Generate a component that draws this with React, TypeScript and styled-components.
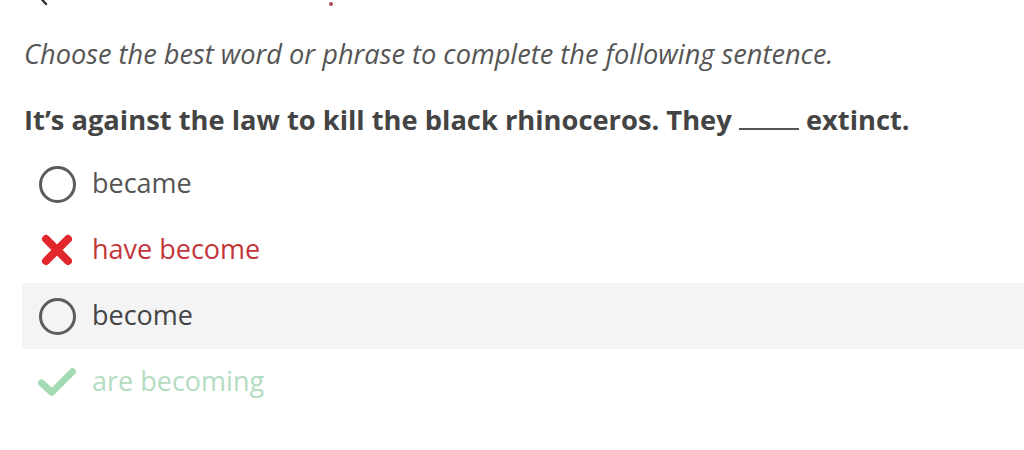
import React from "react";
import styled, { createGlobalStyle } from "styled-components";

const Global = createGlobalStyle`
  html, body { margin: 0; padding: 0; background: #ffffff; }
  body { font-family: "Open Sans", "Liberation Sans", sans-serif; overflow: hidden; }
`;

const Page = styled.div`
  width: 1024px;
  height: 450px;
  display: flex;
  flex-direction: column;
  background: #fff;
`;

const TopBar = styled.div`
  height: 8px;
  display: flex;
  align-items: flex-start;
  padding-left: 37px;
  overflow: hidden;
`;

const Dot = styled.span`
  width: 4px;
  height: 4px;
  border-radius: 50%;
  background: #b04a55;
  margin-left: 278px;
  margin-top: 2px;
`;

const Content = styled.div`
  padding: 0 0 0 22px;
  display: flex;
  flex-direction: column;
`;

const Instruction = styled.p`
  margin: 28px 0 0 2px;
  font-style: italic;
  font-size: 27.2px;
  line-height: 36px;
  color: #555555;
`;

const Question = styled.h2`
  margin: 30px 0 0 2px;
  font-weight: 700;
  font-size: 27.3px;
  line-height: 36px;
  color: #444444;
`;

const Blank = styled.span`
  display: inline-block;
  width: 60px;
  border-bottom: 2px solid #555;
  vertical-align: baseline;
`;

const Options = styled.div`
  margin-top: 13px;
  display: flex;
  flex-direction: column;
`;

type Tone = "plain" | "wrong" | "hover" | "right";

const Row = styled.div<{ $tone: Tone }>`
  height: 66px;
  display: flex;
  align-items: center;
  padding-left: 16px;
  gap: 16px;
  background: ${(p) => (p.$tone === "hover" ? "#f4f4f4" : "transparent")};
  font-size: 27px;
  color: ${(p) =>
    p.$tone === "wrong" ? "#c3363b" : p.$tone === "right" ? "#b4dcc1" : p.$tone === "hover" ? "#444" : "#555"};
`;

const IconBox = styled.span`
  width: 38px;
  height: 38px;
  display: flex;
  align-items: center;
  justify-content: center;
  flex: none;
`;

const Radio = styled.span`
  width: 31px;
  height: 31px;
  border-radius: 50%;
  border: 3px solid #5c5c5c;
`;

const Label = styled.span`
  line-height: 1;
  margin-top: -4px;
`;

const Cross = () => (
  <svg width="34" height="34" viewBox="0 0 34 34">
    <path d="M6 6 L28 28 M28 6 L6 28" stroke="#e1272b" strokeWidth="8" strokeLinecap="round" />
  </svg>
);

const Check = () => (
  <svg width="44" height="34" viewBox="0 0 44 34">
    <path d="M4 18 L16 29 L40 5" stroke="#a5dbb4" strokeWidth="8" fill="none" strokeLinecap="round" strokeLinejoin="round" />
  </svg>
);

const Chevron = () => (
  <svg width="14" height="8" viewBox="0 0 14 8">
    <path d="M0 -6 L9 4" stroke="#333" strokeWidth="2.4" strokeLinecap="round" />
  </svg>
);

export default function App() {
  return (
    <Page>
      <Global />
      <TopBar>
        <Chevron />
        <Dot />
      </TopBar>
      <Content>
        <Instruction>Choose the best word or phrase to complete the following sentence.</Instruction>
        <Question>
          It’s against the law to kill the black rhinoceros. They <Blank /> extinct.
        </Question>
        <Options>
          <Row $tone="plain">
            <IconBox><Radio /></IconBox>
            <Label>became</Label>
          </Row>
          <Row $tone="wrong">
            <IconBox><Cross /></IconBox>
            <Label>have become</Label>
          </Row>
          <Row $tone="hover">
            <IconBox><Radio /></IconBox>
            <Label>become</Label>
          </Row>
          <Row $tone="right">
            <IconBox><Check /></IconBox>
            <Label>are becoming</Label>
          </Row>
        </Options>
      </Content>
    </Page>
  );
}
